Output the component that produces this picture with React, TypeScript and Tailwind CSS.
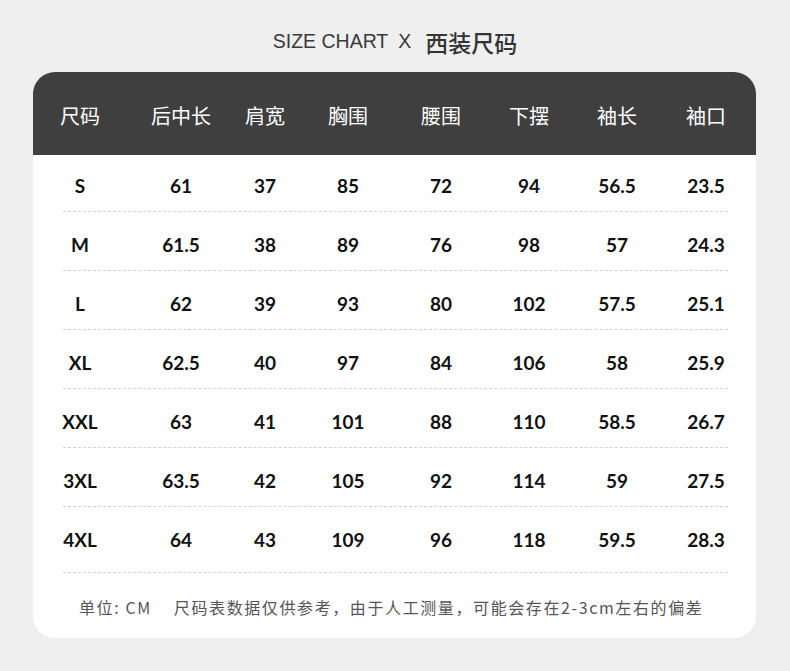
import React from 'react'

const headers = ['尺码', '后中长', '肩宽', '胸围', '腰围', '下摆', '袖长', '袖口']

const rows = [
  ['S', '61', '37', '85', '72', '94', '56.5', '23.5'],
  ['M', '61.5', '38', '89', '76', '98', '57', '24.3'],
  ['L', '62', '39', '93', '80', '102', '57.5', '25.1'],
  ['XL', '62.5', '40', '97', '84', '106', '58', '25.9'],
  ['XXL', '63', '41', '101', '88', '110', '58.5', '26.7'],
  ['3XL', '63.5', '42', '105', '92', '114', '59', '27.5'],
  ['4XL', '64', '43', '109', '96', '118', '59.5', '28.3'],
]

// each column is 60px wide; margins put the centres where the chart has them
const colMargin = ['ml-[17px]', 'ml-[41px]', 'ml-[24px]', 'ml-[23px]', 'ml-[33px]', 'ml-[28px]', 'ml-[28px]', 'ml-[29px]']

const cjk = "font-['Noto_Sans_CJK_SC',sans-serif]"

export default function App() {
  return (
    <div className="min-h-[671px] w-full bg-[#efefef] px-[33px] pt-[28px] pb-[33px]">
      {/* Title */}
      <div className="mb-[16px] flex h-[28px] items-center justify-center">
        <span className="font-['Liberation_Sans',sans-serif] text-[19.5px] text-[#3a3a3a]">SIZE CHART</span>
        <span className="ml-[10px] font-['Liberation_Sans',sans-serif] text-[19.5px] text-[#3a3a3a]">X</span>
        <span className={`${cjk} ml-[14px] text-[23px] font-medium text-[#333]`}>西装尺码</span>
      </div>

      <div className="w-[723px] overflow-hidden rounded-[22px] bg-white">
        {/* Header */}
        <div className="flex h-[83px] items-center bg-[#3f3f3f] pt-[4px]">
          {headers.map((h, j) => (
            <div key={h} className={`${cjk} ${colMargin[j]} w-[60px] whitespace-nowrap text-center text-[20px] text-white`}>
              {h}
            </div>
          ))}
        </div>

        {/* Body */}
        {rows.map((r, i) => (
          <div key={r[0]}>
            <div
              className={`flex ${
                i === 0 ? 'pt-[19px] pb-[13px]' : i === rows.length - 1 ? 'pt-[21px] pb-[20px]' : 'pt-[21px] pb-[13px]'
              }`}
            >
              {r.map((v, j) => (
                <div
                  key={j}
                  className={`${colMargin[j]} w-[60px] text-center font-['Lato',sans-serif] text-[19px] font-bold leading-[24px] text-[#111]`}
                >
                  {v}
                </div>
              ))}
            </div>
            <div className="ml-[30px] mr-[28px] border-b border-dashed border-[#d2d2d2]" />
          </div>
        ))}

        <div className={`${cjk} mt-[22px] mb-[19px] flex pl-[46px] text-[16px] leading-[24px] tracking-[1.6px] text-[#555]`}>
          <span>单位: CM</span>
          <span className="ml-[22px]">尺码表数据仅供参考，由于人工测量，可能会存在2-3cm左右的偏差</span>
        </div>
      </div>
    </div>
  )
}
